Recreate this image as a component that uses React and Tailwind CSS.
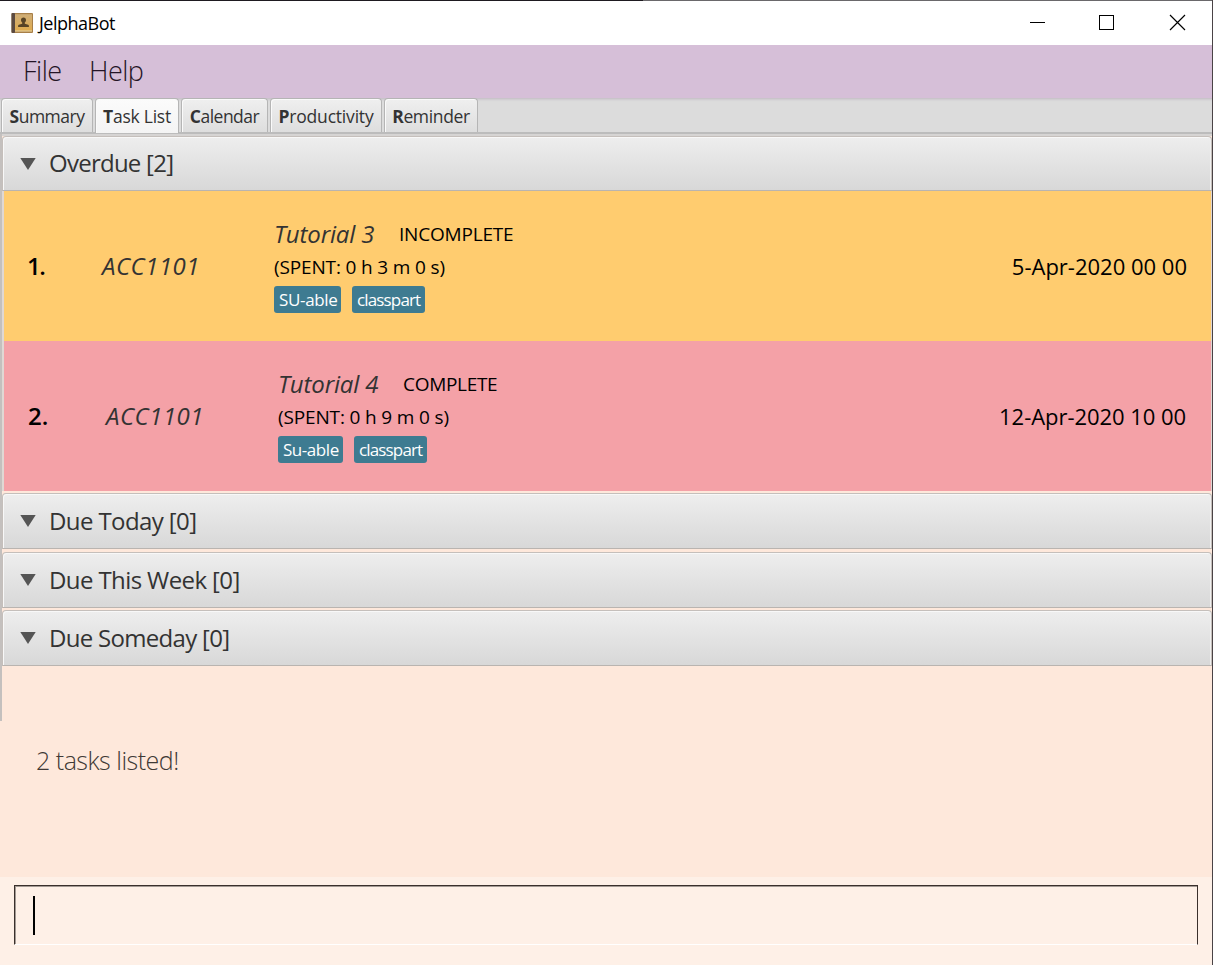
import React from "react";

const TABS = [
  { k: "S", rest: "ummary", cls: "w-[92px] tracking-[-0.5px] pt-[2px]" },
  { k: "T", rest: "ask List", cls: "w-[84px] tracking-[-0.25px] pt-px", active: true },
  { k: "C", rest: "alendar", cls: "w-[87px] tracking-[-0.5px] pt-[2px]" },
  { k: "P", rest: "roductivity", cls: "w-[112px] tracking-[-0.2px] pt-[2px]" },
  { k: "R", rest: "eminder", cls: "w-[94px] tracking-[-0.35px] pt-[2px]" },
];

const TASKS = [
  {
    n: "1.",
    nCls: "tracking-[-1.5px]",
    bg: "bg-[#ffcc6f]",
    codeCls: "w-[172px] ml-[98px]",
    name: "Tutorial 3",
    status: "INCOMPLETE",
    statusCls: "tracking-[-0.2px]",
    spent: "(SPENT: 0 h 3 m 0 s)",
    tags: [
      { t: "SU-able", cls: "w-[67px] tracking-[-0.35px]" },
      { t: "classpart", cls: "w-[73px] tracking-[-0.85px]" },
    ],
    date: "5-Apr-2020 00 00",
    dateCls: "mr-[24px]",
  },
  {
    n: "2.",
    nCls: "pl-px",
    bg: "bg-[#f4a1a7]",
    codeCls: "w-[172px] ml-[102px]",
    name: "Tutorial 4",
    status: "COMPLETE",
    statusCls: "tracking-[-0.3px]",
    spent: "(SPENT: 0 h 9 m 0 s)",
    tags: [
      { t: "Su-able", cls: "w-[65px] tracking-[-0.45px]" },
      { t: "classpart", cls: "w-[73px] tracking-[-0.85px]" },
    ],
    date: "12-Apr-2020 10 00",
    dateCls: "mr-[25px] tracking-[-0.05px]",
  },
];

function BookIcon() {
  return (
    <svg width="22" height="22" viewBox="0 0 22 22" className="-mt-px shrink-0">
      <defs>
        <linearGradient id="cover" x1="0" y1="0" x2="0" y2="1">
          <stop offset="0" stopColor="#cfae78" />
          <stop offset="1" stopColor="#e0ab4e" />
        </linearGradient>
      </defs>
      <rect x="0.500" y="1" width="21.500" height="20" rx="1" fill="#a87f48" />
      <rect x="0.500" y="1" width="3.500" height="20" rx="1" fill="#5b4a40" />
      <rect x="4" y="2.200" width="17" height="16.500" fill="url(#cover)" />
      <rect x="4" y="18.500" width="17" height="1" fill="#f3dfa8" />
      <path d="M12.500 5.500c1.600 0 2.500 1 2.500 2.500 0 1.100-.5 2-1.200 2.500v1.300l3.400 1c.5.2.7.5.7 1v1.200H7.100v-1.200c0-.5.2-.8.700-1l3.400-1v-1.300c-.7-.5-1.200-1.400-1.200-2.500C10 6.500 10.900 5.500 12.500 5.500z" fill="#574326" />
    </svg>
  );
}

function WindowButtons() {
  return (
    <svg width="160" height="20" viewBox="0 0 160 20" fill="none" stroke="#000" className="ml-auto mr-[24px]" shapeRendering="crispEdges">
      <path d="M2 9.500H17" />
      <rect x="71.500" y="2.500" width="14" height="14" />
      <path d="M142 2L157 17M157 2L142 17" shapeRendering="auto" strokeWidth="1.200" />
    </svg>
  );
}

function Header({ title, height = "h-[56px]", cls = "" }) {
  return (
    <div className={`${height} flex shrink-0 items-center rounded-t-[4px] border border-[#c5bfbb] border-b-[#b9b4b0] bg-gradient-to-b from-[#eeeeee] to-[#d8d8d8] pl-[17px] shadow-[inset_1px_1px_0_#f8f8f8,inset_-1px_0_0_#f0f0f0]`}>
      <svg width="16" height="12" viewBox="0 0 16 12" className="shrink-0">
        <path d="M0.300 0H15.700L8 12z" fill="#555" />
      </svg>
      <span className={`ml-[13px] whitespace-nowrap text-[24px] leading-none text-[#333] ${cls}`}>{title}</span>
    </div>
  );
}

function Task({ task }) {
  return (
    <div className={`${task.bg} flex h-[150px] shrink-0 items-center whitespace-nowrap`}>
      <div className="flex w-0">
        <span className={`ml-[23px] text-[24px] font-semibold text-black ${task.nCls}`}>{task.n}</span>
      </div>
      <span className={`${task.codeCls} text-[24px] italic tracking-[0.5px] text-[#333]`}>ACC1101</span>
      <div className="mt-[26px] flex flex-col self-start">
        <div className="flex h-[34px] items-center">
          <span className="w-[125px] text-[24px] italic tracking-[-0.15px] text-[#333]">{task.name}</span>
          <span className={`text-[19px] text-black ${task.statusCls}`}>{task.status}</span>
        </div>
        <span className="flex h-[33px] items-center text-[19px] tracking-[-0.15px] text-black">{task.spent}</span>
        <div className="mt-[2px] flex gap-[11px]">
          {task.tags.map((tag) => (
            <span key={tag.t} className={`flex h-[27px] items-center rounded-[3px] bg-[#3e7b91] pl-[5px] text-[17px] leading-none text-white ${tag.cls}`}>
              {tag.t}
            </span>
          ))}
        </div>
      </div>
      <span className={`ml-auto text-[22px] text-black ${task.dateCls}`}>{task.date}</span>
    </div>
  );
}

export default function App() {
  return (
    <div className="flex h-[965px] w-[1213px] flex-col overflow-hidden border-r border-[#4a4346] bg-[#fee8db] font-['Open_Sans','Noto_Sans',sans-serif]">
      <div className="flex h-px shrink-0">
        <div className="w-[643px] bg-[#1e1a20]" />
        <div className="flex-1 bg-[#6a686b]" />
      </div>
      <div className="flex h-[44px] shrink-0 items-center bg-white pl-[11px]">
        <BookIcon />
        <span className="ml-[6px] text-[18px] tracking-[-0.5px] text-black">JelphaBot</span>
        <WindowButtons />
      </div>
      <div className="flex h-[53px] shrink-0 items-center bg-[#d6bfd8] pl-[23px] text-[27px] font-light tracking-[-0.5px] text-[#241426]">
        <span className="w-[66px]">File</span>
        <span>Help</span>
      </div>
      <div className="flex h-[36px] shrink-0 gap-[2px] border-b-2 border-[#bcbcbc] bg-[#dcdcdc] pl-px shadow-[inset_0_3px_3px_-2px_#bfb6c0]">
        {TABS.map((t) => (
          <div
            key={t.k}
            className={`${t.cls} flex shrink-0 items-center justify-center whitespace-nowrap rounded-t-[4px] border border-b-0 border-[#b5b5b5] text-[17.5px] text-[#333] shadow-[inset_1px_1px_0_#fafafa] ${t.active ? "-mb-px bg-gradient-to-b from-[#fbfbfb] to-[#f4f4f4]" : "bg-gradient-to-b from-[#efefef] to-[#dedede]"}`}
          >
            <b>{t.k}</b>
            <span>{t.rest}</span>
          </div>
        ))}
      </div>
      <div className="flex h-[587px] shrink-0 flex-col border-l-2 border-[#c4c0be]">
        <div className="h-[2px] shrink-0 bg-[#d6d4d3]" />
        <Header title="Overdue [2]" height="h-[55px]" cls="-mt-px pb-px tracking-[-0.75px]" />
        <div className="mb-[2px] flex flex-col border-l-2 border-r border-[#e0d8d4]">
          {TASKS.map((t) => (
            <Task key={t.n} task={t} />
          ))}
        </div>
        <div className="flex flex-col gap-[2.500px]">
          <Header title="Due Today [0]" cls="tracking-[-0.6px]" />
          <Header title="Due This Week [0]" cls="tracking-[-0.6px]" />
          <Header title="Due Someday [0]" cls="tracking-[-0.7px]" />
        </div>
      </div>
      <div className="h-[156px] shrink-0 pl-[36px] pt-[21px] text-[25px] font-light tracking-[-0.5px] text-[#3f3935]">
        2 tasks listed!
      </div>
      <div className="flex flex-1 flex-col bg-[#fef0e7] pl-[14px] pr-[14px] pt-[8px]">
        <div className="flex h-[60px] items-start border border-[#3a302c] border-b-white pl-[18px] pt-[10px] shadow-[inset_1px_1px_0_#a39a94]">
          <div className="h-[39px] w-[2px] bg-black" />
        </div>
      </div>
    </div>
  );
}
